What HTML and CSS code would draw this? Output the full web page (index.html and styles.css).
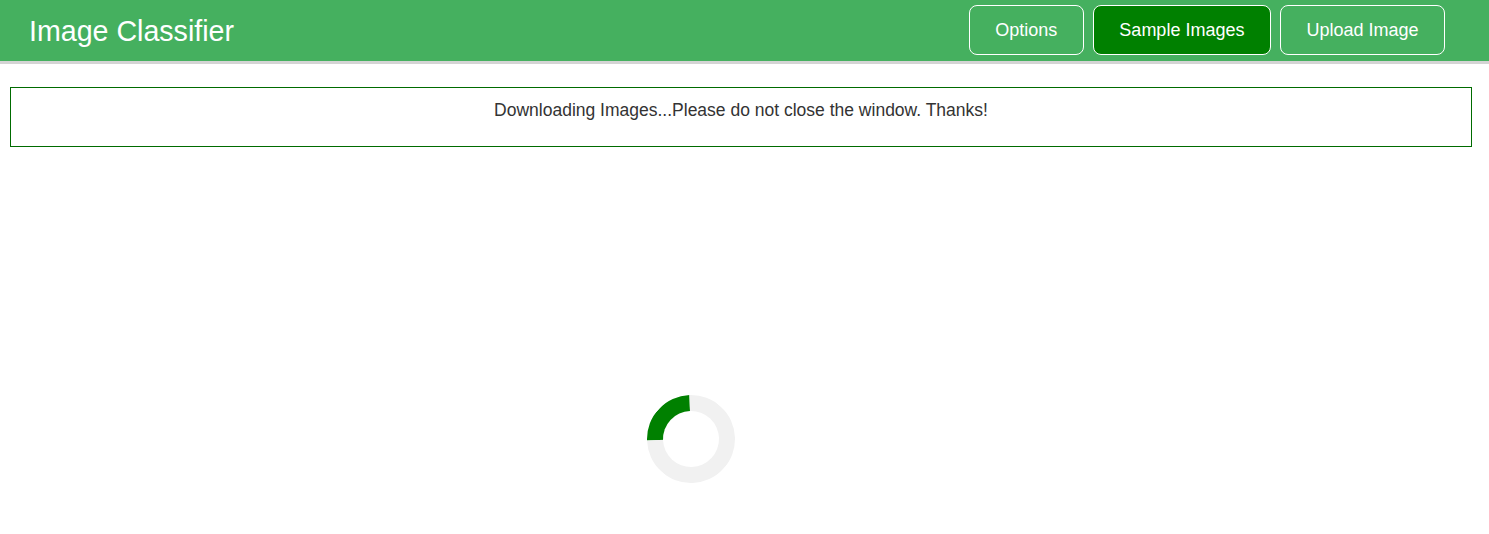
FILE: index.html
```html
<!DOCTYPE html>
<html>
<head>
<meta charset="utf-8">
<title>Image Classifier</title>
<link rel="stylesheet" href="styles.css">
</head>
<body>
<header class="topbar">
  <h1 class="title">Image Classifier</h1>
  <nav class="actions">
    <button class="btn">Options</button>
    <button class="btn btn-active">Sample Images</button>
    <button class="btn">Upload Image</button>
  </nav>
</header>
<main class="content">
  <div class="notice">Downloading Images...Please do not close the window. Thanks!</div>
  <div class="spinner-wrap">
    <div class="spinner"></div>
  </div>
</main>
</body>
</html>
```

FILE: styles.css
```css
* { box-sizing: border-box; }
html, body { margin: 0; padding: 0; background: #fff; }
body { font-family: "Liberation Sans", Arial, sans-serif; color: #333; }

.topbar {
  display: flex;
  align-items: center;
  justify-content: space-between;
  height: 64px;
  background: #45b05f;
  border-bottom: 3px solid #d4d4d4;
  padding: 0 44px 0 29px;
}
.title {
  margin: 0;
  font-size: 28.6px;
  font-weight: normal;
  color: #fff;
  line-height: 1;
  padding-top: 1px;
}
.actions {
  display: flex;
  gap: 9px;
  align-items: center;
  padding-bottom: 1px;
}
.btn {
  font-family: "Liberation Sans", Arial, sans-serif;
  font-size: 18px;
  color: #fff;
  background: transparent;
  border: 1px solid #fff;
  border-radius: 8px;
  height: 50px;
  padding: 0 25.5px;
}
.btn-active { background: #008000; }

.content { padding: 23px 17px 0 10px; }
.notice {
  border: 1px solid #006b00;
  height: 60px;
  padding-top: 12px;
  text-align: center;
  font-size: 17.5px;
  color: #333;
}
.spinner-wrap {
  display: flex;
  justify-content: center;
  padding-top: 248px;
  padding-right: 100px;
}
.spinner {
  width: 88px;
  height: 88px;
  border-radius: 50%;
  border: 16px solid #f1f1f1;
  border-top-color: #008000;
  transform: rotate(-47deg);
}
```
